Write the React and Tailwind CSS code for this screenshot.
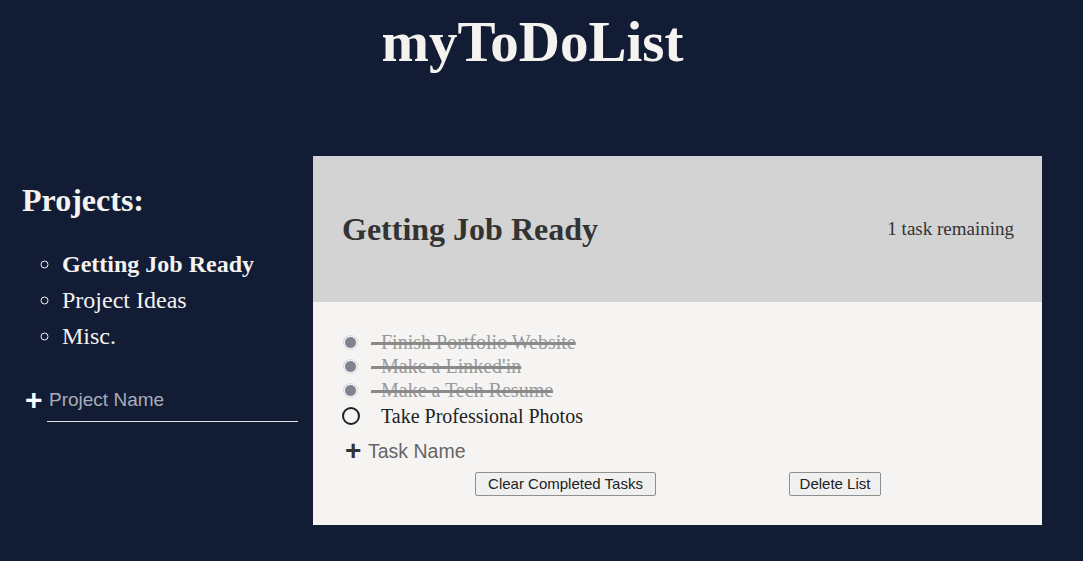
import React, { useState } from 'react';

const projects = [
    { name: 'Getting Job Ready', active: true },
    { name: 'Project Ideas', active: false },
    { name: 'Misc.', active: false },
];

const initialTasks = [
    { id: 1, name: 'Finish Portfolio Website', done: true },
    { id: 2, name: "Make a Linked'in", done: true },
    { id: 3, name: 'Make a Tech Resume', done: true },
    { id: 4, name: 'Take Professional Photos', done: false },
];

const serif = "font-['Liberation_Serif','Times_New_Roman',serif]";
const sans = "font-['Liberation_Sans',Arial,sans-serif]";

const App = () => {
    const [tasks] = useState(initialTasks);
    const remaining = tasks.filter(t => !t.done).length;

    return (
        <div className={`min-h-[561px] w-full bg-[#121c35] ${serif}`}>
            <h1 className="pt-[10px] pr-[18px] text-center text-[57px] font-bold leading-[64px] text-[#f5f3f0]">
                myToDoList
            </h1>

            <div className="mt-[82px] flex">
                {/* sidebar */}
                <div className="w-[313px] pl-[22px] pt-[26px]">
                    <h2 className="text-[32px] font-bold leading-[36px] text-[#f5f3f0]">Projects:</h2>
                    <ul className="mt-[28px] pl-[40px] list-[circle] text-[24px] leading-[36px] text-[#f5f3f0]">
                        {projects.map(p => (
                            <li key={p.name} className={p.active ? 'font-bold' : ''}>{p.name}</li>
                        ))}
                    </ul>
                    <div className={`mt-[34px] flex items-center ${sans}`}>
                        <span className="w-[25px] pb-[10px] pl-[3px] text-[30px] font-bold leading-[24px] text-white">+</span>
                        <div className="w-[251px] border-b border-[#e5e5e5] pb-[10px] pl-[2px] text-[19px] leading-[22px] text-[#a9adb8]">
                            Project Name
                        </div>
                    </div>
                </div>

                {/* list panel */}
                <div className="w-[729px]">
                    <div className="flex h-[146px] items-center justify-between bg-[#d3d3d3] pl-[29px] pr-[28px] text-[#333333]">
                        <h2 className="text-[32px] font-bold">Getting Job Ready</h2>
                        <span className="text-[19px]">{remaining} task remaining</span>
                    </div>
                    <div className="h-[223px] bg-[#f5f4f2] pl-[29px] pt-[28px]">
                        <div className="flex flex-col">
                            {tasks.map(t => (
                                <label key={t.id} className={`flex items-center ${t.done ? 'h-[24px]' : 'h-[28px]'}`}>
                                    {t.done ? (
                                        <span className="ml-[2px] mr-[14px] size-[13px] rounded-full border border-[#ffffff] bg-[#80838f] ring-1 ring-[#d8d8dc]" />
                                    ) : (
                                        <span className="mr-[21px] size-[18px] rounded-full border-2 border-[#222222]" />
                                    )}
                                    {t.done ? (
                                        <span className="text-[20px] text-[#9a9a9a] line-through decoration-[#8a8a8a] decoration-[3px]">
                                            {'\u00a0\u00a0'}{t.name}
                                        </span>
                                    ) : (
                                        <span className="text-[20px] text-[#222222]">{t.name}</span>
                                    )}
                                </label>
                            ))}
                        </div>
                        <div className={`mt-[9px] flex items-center ${sans}`}>
                            <span className="ml-[3px] w-[26px] text-[28px] font-bold leading-[24px] text-[#333333]">+</span>
                            <span className="-ml-[3px] text-[19.5px] leading-[24px] text-[#666666]">Task Name</span>
                        </div>
                        <div className={`mt-[9px] flex ${sans} text-[15px] text-[#222222]`}>
                            <button className="ml-[133px] h-[24px] w-[181px] rounded-[2px] border border-[#8f8f8f] bg-[#f0f0f0] leading-[20px]">
                                Clear Completed Tasks
                            </button>
                            <button className="ml-[133px] h-[24px] w-[92px] rounded-[2px] border border-[#8f8f8f] bg-[#f0f0f0] leading-[20px]">
                                Delete List
                            </button>
                        </div>
                    </div>
                </div>
            </div>
        </div>
    );
};

export default App;
